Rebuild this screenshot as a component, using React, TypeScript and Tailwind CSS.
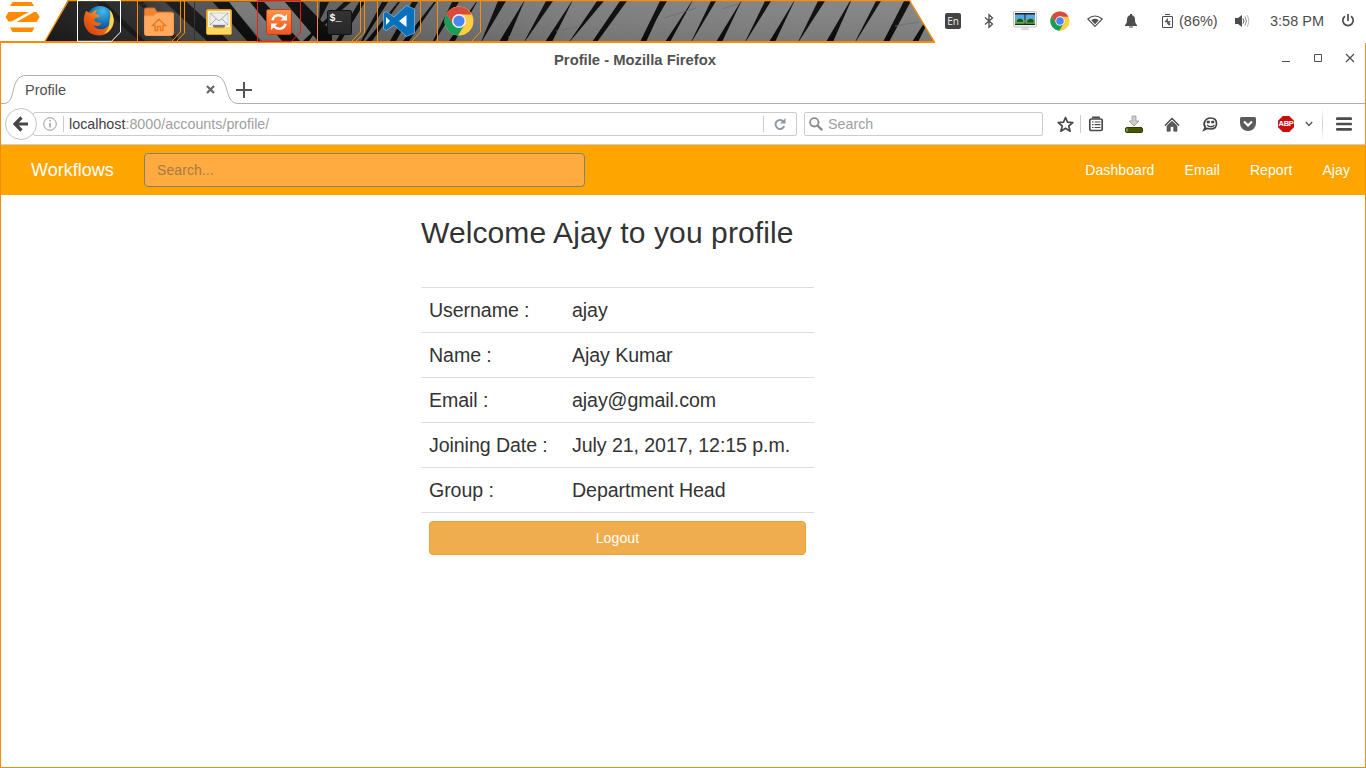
import type { ReactNode } from "react";

const UI_FONT = "font-['Liberation_Sans',Arial,sans-serif]";

/* Each blade: left x at the top, left x at the bottom, width at the top and at the bottom. */
const blades: [number, number, number, number][] = [
  [498, 481, 8, 0.5], [524, 499, 0.5, 8], [546, 524, 7, 0.5], [572, 545, 0.5, 7],
  [597, 569, 7, 0.5], [620, 592, 7, 5], [664, 641, 1, 5], [660, 640, 7, 3],
  [692, 665, 0.5, 5], [711, 691, 5, 0.5], [741, 716, 0.5, 6], [765, 745, 6, 0.5],
  [794, 769, 0.5, 6], [818, 798, 7, 0.5], [850, 826, 1, 7], [876, 855, 5, 0.5],
  [904, 883, 7, 6], [938, 912, 0.5, 6],
];

const darkBlades = [
  "M320 2h9l-10 20z", "M344 2h7l-37 32-5 7h-6z", "M359 2h6l-24 39h-5z",
  "M382 2h6l-25 39h-2z", "M398 2h2l-28 39h-6z", "M412 2h6l-22 39h-6z",
  "M434 2h2l-27 39h-6z", "M452 2h7l-24 39h-2z", "M476 2h1l-22 39h-6z",
];

function Backdrop() {
  return (
    <svg className="absolute inset-0" width="936" height="43" viewBox="0 0 936 43">
      <defs>
        <linearGradient id="metal" x1="45" x2="935" y1="0" y2="0" gradientUnits="userSpaceOnUse">
          <stop offset="0" stopColor="#191919" />
          <stop offset="0.1" stopColor="#2a2a2a" />
          <stop offset="0.15" stopColor="#444" />
          <stop offset="0.3" stopColor="#5c5c5c" />
          <stop offset="0.45" stopColor="#6e6e6e" />
          <stop offset="0.6" stopColor="#7d7d7d" />
          <stop offset="1" stopColor="#848484" />
        </linearGradient>
        <linearGradient id="shade" x2="0" y2="1">
          <stop offset="0" stopColor="#fff" stopOpacity="0.04" />
          <stop offset="1" stopColor="#000" stopOpacity="0.08" />
        </linearGradient>
        <clipPath id="band"><path d="M68 0H909.5L935 43H44z" /></clipPath>
      </defs>
      <g clipPath="url(#band)">
        <rect x="40" width="896" height="43" fill="url(#metal)" />
        <path d="M165 2h22l42 39h-22z" fill="#151515" />
        <path d="M187 2h26l30 39h-14z" fill="#505050" />
        <path d="M228 2h24l34 39h-24z" fill="#777" />
        <path d="M263 2h22l34 39h-22z" fill="#747474" />
        <g fill="#0a0a0a">
          <path d="M96 2h9l40 39h-6zM137 2h6l38 39h-6z" opacity="0.6" />
          <path d="M213 2h16l31 39h-13zM250 2h14l36 39h-18zM285 2h18l29 30v9h-14z" />
          {darkBlades.map((d) => <path key={d} d={d} />)}
          {blades.map(([t, b, tw, bw]) => (
            <path key={t} d={`M${t} 1h${tw}L${b + bw} 42h-${bw}z`} />
          ))}
        </g>
        <rect x="40" width="896" height="43" fill="url(#shade)" />
        <path d="M508 37l20-4M556 31l22-4M664 18l32-10M722 9l16-5M895 26l24-4" stroke="#6c6c6c" fill="none" strokeWidth=".8" />
      </g>
      <g fill="none" stroke="#ff8c00">
        <path d="M44.5 42L68.5 .5H909.5L934.5 42" strokeWidth="1.3" />
        <path d="M0 42H935" strokeWidth="2" />
        <path d="M137.5 1V41M180.5 1V32L172 41M184.5 1V33L177 41M317.5 1V41M360.5 1V32L352 41M364.5 1V33L356 41M377.5 1V41M420.5 1V32L412 41M437.5 1V41M480.5 1V32L472 41" />
      </g>
      <path d="M194.5 2V41" stroke="#333" />
      <path d="M77.5 .5H120.5V32L111.500 41.300H77.5z" fill="none" stroke="#fff" />
      <path d="M257.5 .5H300.5V32L291.500 41.300H257.5z" fill="none" stroke="#f21a12" />
    </svg>
  );
}

function ZorinLogo() {
  return (
    <svg width="46" height="36" viewBox="0 0 46 36" fill="#ff8c00">
      <path d="M12.500 2H31.500L34 6H10zM8.500 12H29L11.500 21.500H8.500L5.500 17zM36.500 12L39.700 17 36.500 22H16.500L34 12zM10 27.500H34.500L32 32H12.500z" />
    </svg>
  );
}

function FirefoxIcon() {
  return (
    <svg width="32" height="32" viewBox="0 0 32 32">
      <defs>
        <radialGradient id="globe" cx="0.6" cy="0.2" r="0.8">
          <stop offset="0" stopColor="#46b9e9" /><stop offset="0.6" stopColor="#126bb3" /><stop offset="1" stopColor="#123a78" />
        </radialGradient>
        <linearGradient id="fox" x1="0" y1="1" x2="1" y2="0">
          <stop offset="0" stopColor="#c93512" /><stop offset="0.5" stopColor="#ee6a13" /><stop offset="1" stopColor="#ffd83d" />
        </linearGradient>
      </defs>
      <circle cx="17" cy="14.500" r="13.500" fill="url(#globe)" />
      <path d="M3 6C1 10 0 15 1.500 20 4 27 9 30.500 16 30.500c9 0 14.500-7 14.500-14.500 0-5-1.500-8-4-11 1 4 1 7 0 9 1 6-2 9-6 10-5 1-9-1-10-4 3 2 5 1 8-1-1-2-3-1-5-2-2 0-3-3-1-4l4-1c0-2-2-3-4-3 0-2 1-3 2-4-3 0-5 2-6 3-2 0-4-1-5-2z" fill="url(#fox)" />
      <path d="M27 5c2.500 3 3.800 7 3.700 11C30.500 22 26 27 21 29c4-4 6-8 5.500-13C28 12 28 9 27 5z" fill="#ffd447" />
    </svg>
  );
}

function HomeFolderIcon() {
  return (
    <svg width="32" height="30" viewBox="0 0 32 30">
      <path d="M1.500 2.500q0-1.500 1.500-1.500h8.500l2.500 4h14q1.500 0 1.500 1.500V12h-28z" fill="#ed8436" stroke="#cf6c20" />
      <path d="M1.500 9h9l3-3h16.500q.5 0 .5 1v19.500q0 2-2 2H3.500q-2 0-2-2z" fill="#ffaa60" stroke="#f9984d" />
      <path d="M9.500 18.500L16 12.200 22.500 18.500H20v5h-2.500v-4h-3v4H12v-5z" fill="none" stroke="#e97a20" strokeWidth="1.500" />
    </svg>
  );
}

function MailIcon() {
  return (
    <svg width="28" height="28" viewBox="0 0 28 28">
      <rect x="1.500" y="1.500" width="25" height="25" rx="1.500" fill="#f5b83b" stroke="#e39b20" />
      <rect x="3" y="3" width="22" height="16" fill="#fff6e0" />
      <path d="M2 19h6q1 1.500 3 1.500h6q2 0 3-1.500h6v7H2z" fill="#ffd65e" />
      <path d="M5 5h18v12H5z" fill="#eee" stroke="#ccc" />
      <path d="M5 5l9 8 9-8M5 17l6-6M23 17l-6-6" fill="none" stroke="#999" strokeWidth=".8" />
      <path d="M8 17h12v1.500q-1 1-2 1h-8q-1 0-2-1z" fill="#777" />
    </svg>
  );
}

function UpdaterIcon() {
  return (
    <svg width="28" height="28" viewBox="0 0 28 28">
      <defs><linearGradient id="upd" x2="0" y2="1"><stop stopColor="#ff9548" /><stop offset="1" stopColor="#ed5522" /></linearGradient></defs>
      <rect x="1.500" y="1.500" width="25" height="25" rx="2" fill="url(#upd)" stroke="#bd3f16" />
      <path d="M7.500 12.300C8.500 7 15 5.600 18.800 9.300M20.500 15.700C19.500 21 13 22.400 9.200 18.700" fill="none" stroke="#fff" strokeWidth="2.400" />
      <path d="M22 6v6.500h-6.500zM6 22v-6.500h6.500z" fill="#fff" />
    </svg>
  );
}

function TerminalIcon() {
  return (
    <span className="flex h-[25px] w-[25px] rounded-[2px] border border-[#141414] bg-gradient-to-b from-[#333] to-[#282828] pl-[2px] pt-[2px] font-['Liberation_Mono',monospace] text-[10px] font-bold leading-3 text-white">
      $_
    </span>
  );
}

function CodeIcon() {
  return (
    <svg width="34" height="34" viewBox="0 0 34 34">
      <path d="M24.500 1.500L32.500 5V29L24.500 32.500 12 21 4.500 26.500 1.500 25V9L4.500 7.500 12 13z" fill="#0871bd" stroke="#8cc0e4" strokeWidth=".7" />
      <path d="M24.500 11v12L17 17zM4 13v8l4-4z" fill="#fff" />
    </svg>
  );
}

function ChromeIcon({ size }: { size: number }) {
  return (
    <svg width={size} height={size} viewBox="0 0 30 30">
      <circle cx="15" cy="15" r="14.500" fill="#ffce43" />
      <path d="M2.400 7.800A14.500 14.500 0 0 1 27.600 8.500H15L8.800 18.500z" fill="#d74a3d" />
      <path d="M2.400 7.800A14.500 14.500 0 0 0 14 29.500L20.700 18.500 15 21.500 9 18.400z" fill="#199c57" />
      <circle cx="15" cy="15" r="7" fill="#f3f3f3" />
      <circle cx="15" cy="15" r="5.600" fill="#4a85f0" />
    </svg>
  );
}

function Cell({ w, children }: { w: string; children?: ReactNode }) {
  return <div className={`flex h-full shrink-0 items-center justify-center ${w}`}>{children}</div>;
}

function Launcher() {
  return (
    <div className="relative h-[43px] w-[936px] shrink-0">
      <Backdrop />
      <div className="relative flex h-[41px]">
        <div className="w-[69px]"><ZorinLogo /></div>
        <Cell w="w-[60px]"><FirefoxIcon /></Cell>
        <Cell w="w-[60px] pt-[2px]"><HomeFolderIcon /></Cell>
        <Cell w="w-[60px] pt-[3px]"><MailIcon /></Cell>
        <Cell w="w-[60px] pt-[3px]"><UpdaterIcon /></Cell>
        <Cell w="w-[60px] pt-[3px]"><TerminalIcon /></Cell>
        <Cell w="w-[60px]"><CodeIcon /></Cell>
        <Cell w="w-[60px]"><ChromeIcon size={30} /></Cell>
      </div>
    </div>
  );
}

function Tray() {
  return (
    <div className="flex h-[42px] flex-1 items-center pl-[9px] text-[14.500px] text-[#4d4d4d]">
      <span className="flex h-4 w-4 items-center justify-center rounded-[2px] bg-[#444] font-['Open_Sans',sans-serif] text-[10px] text-[#eee]">En</span>
      <Cell w="w-[54px] pl-[2px]">
        <svg width="12" height="16" viewBox="0 0 12 16" fill="none" stroke="#4d4d4d" strokeWidth="1.300"><path d="M2 4.500L9.500 11 6 14.300V1.700L9.500 5 2 11.500" /></svg>
      </Cell>
      <Cell w="w-[20px]">
        <svg width="24" height="20" viewBox="0 0 24 20" className="shrink-0">
          <rect x=".5" y=".5" width="23" height="15.500" rx="1" fill="#f1f1f1" stroke="#c5c5c5" />
          <rect x="2" y="2" width="20" height="12" fill="#222" />
          <path d="M2 3.500h9.500v9H2zM12.500 3.500H22v9h-9.500z" fill="#55a9ea" />
          <path d="M2 9q5-2 9.500 0v3.500H2zM12.500 9q5-2 9.500 0v3.500h-9.500z" fill="#5db634" />
          <path d="M4 9.500q3-4 6 0v1.500H4zM14 10q3-4 6.500-1v2.500H14z" fill="#23501c" />
          <path d="M9 16h6l1.500 3h-9z" fill="#d9d9d9" />
        </svg>
      </Cell>
      <Cell w="w-[50px]"><ChromeIcon size={20} /></Cell>
      <Cell w="w-[20px]">
        <svg width="16" height="12" viewBox="0 0 16 12" className="shrink-0"><path d="M.8 4Q8-2 15.200 4L8 11.400z" fill="none" stroke="#4d4d4d" strokeWidth="1.100" /><path d="M4.300 5.200Q8 2.500 11.700 5.200L8 9.300z" fill="#4d4d4d" /></svg>
      </Cell>
      <Cell w="w-[52px]">
        <svg width="12" height="14" viewBox="0 0 12 14" fill="#4d4d4d"><path d="M5 0h2v1.300C9 1.800 10 3.500 10 5.500 10 9 11 10 12 11v1H0v-1c1-1 2-2 2-5.500 0-2 1-3.700 3-4.200zM4 12.500h4v1H4z" /></svg>
      </Cell>
      <Cell w="w-[20px]">
        <svg width="11" height="14" viewBox="0 0 11 14" fill="none" stroke="#4d4d4d"><path d="M.5 2.500h10v11H.5zM3 .5h5" /><path d="M5.500 4.500v3h3L5.500 10V8H3zM6.500 9.500h1.500v1.500H6.500z" fill="#4d4d4d" strokeWidth=".6" /></svg>
      </Cell>
      <span className="ml-[2px] w-[56px] pt-[2px]">(86%)</span>
      <svg width="15" height="14" viewBox="0 0 15 14" fill="none" stroke="#4d4d4d">
        <path d="M0 4h3l4-3v12L3 10H0z" fill="#4d4d4d" stroke="none" /><path d="M8 4.500q2 2.500 0 5" /><path d="M10 2.500q3 4.500 0 9" stroke="#888" /><path d="M12 1q3.500 6 0 12" stroke="#bbb" />
      </svg>
      <span className="ml-[20px] w-[71px] whitespace-nowrap pt-[2px]">3:58 PM</span>
      <svg width="14" height="14" viewBox="0 0 14 14" fill="none" stroke="#4d4d4d" strokeWidth="1.700"><path d="M4 2.200a5.200 5.200 0 1 0 6 0M7 0v7" /></svg>
    </div>
  );
}

function TitleBar() {
  return (
    <div className="flex h-[32px] items-start">
      <div className="w-[553px]" />
      <span className="w-[727px] pt-[7px] text-[14.800px] font-bold leading-[20px] text-[#525252]">Profile - Mozilla Firefox</span>
      <svg width="74" height="14" viewBox="0 0 74 14" className="mt-[8px]" fill="none" stroke="#4d4d4d">
        <path d="M1 10.500h8M33.500 3.500h7v7h-7z" /><path d="M65 3l8 8M73 3l-8 8" strokeWidth="1.200" />
      </svg>
    </div>
  );
}

function TabStrip() {
  return (
    <div className="relative h-[29px]">
      <svg className="absolute inset-0" width="1364" height="29" viewBox="0 0 1364 29" fill="none" stroke="#abaeb2">
        <path d="M0 28.500H3C16 28.500 8 .5 25 .5H213C230 .5 222 28.500 237 28.500H1364" />
      </svg>
      <div className="relative flex h-full items-center pl-[24px] text-[#505050]">
        <span className="w-[181px] pt-[2px] text-[14.500px]">Profile</span>
        <svg width="9" height="9" viewBox="0 0 9 9" stroke="#666" strokeWidth="2.200"><path d="M1 1l7 7M8 1L1 8" /></svg>
        <svg className="ml-[21px]" width="16" height="16" viewBox="0 0 16 16" stroke="#555" strokeWidth="2"><path d="M8 0v16M0 8h16" /></svg>
      </div>
    </div>
  );
}

function Toolbar() {
  return (
    <div className="flex h-[41px] items-center border-b border-[#cfcfcf] text-[14.300px] text-[#a0a0a0]">
      <svg width="32" height="32" viewBox="0 0 32 32" className="z-10 ml-[4px] shrink-0" fill="none">
        <circle cx="16" cy="16" r="15.500" fill="#fff" stroke="#c4c4c4" />
        <path d="M23 16H11M16.500 9.500L10 16l6.500 6.500" stroke="#474747" strokeWidth="3.200" />
      </svg>
      <div className="-ml-[4px] flex h-[24px] w-[764px] shrink-0 items-center rounded-[2px] border border-[#ccc] pl-[9px]">
        <svg width="14" height="14" viewBox="0 0 14 14" fill="none" stroke="#999"><circle cx="7" cy="7" r="6.300" /><path d="M7 6v4.500M7 3v1.500" strokeWidth="1.400" /></svg>
        <span className="ml-[6px] h-4 w-px bg-[#ccc]" />
        <span className="ml-[5px] flex-1 whitespace-nowrap pt-[2px]"><span className="text-[#404040]">localhost</span>:8000/accounts/profile/</span>
        <span className="h-4 w-px bg-[#ccc]" />
        <Cell w="w-[32px]">
          <svg width="12" height="12" viewBox="0 0 12 12" fill="none" stroke="#8b98a5" strokeWidth="2"><path d="M9.500 3.500A4.500 4.500 0 1 0 10.200 8.200" /><path d="M11.500 0v5.500H6z" fill="#8b98a5" stroke="none" /></svg>
        </Cell>
      </div>
      <div className="ml-[7px] flex h-[24px] w-[239px] shrink-0 items-center rounded-[2px] border border-[#ccc] pl-[4px]">
        <svg width="14" height="14" viewBox="0 0 14 14" fill="none" stroke="#8d8d8d"><circle cx="5.300" cy="5.300" r="4.200" strokeWidth="1.800" /><path d="M8.500 8.500l4.700 4.700" strokeWidth="2.400" /></svg>
        <span className="ml-[5px] pt-[2px]">Search</span>
      </div>
      <Cell w="w-[37px] pl-[7px]">
        <svg width="17" height="17" viewBox="0 0 17 17" fill="none" stroke="#4a4a4a" strokeWidth="1.700"><path d="M8.500 1.500l2 4.700 5.300.4-4 3.400 1.300 5.200-4.600-2.900-4.600 2.900 1.300-5.200L1.200 6.600l5.300-.4z" strokeLinejoin="round" /></svg>
      </Cell>
      <span className="h-[18px] w-px bg-[#ccc]" />
      <Cell w="w-[30px]">
        <svg width="16" height="16" viewBox="0 0 16 16" fill="none" stroke="#4a4a4a" strokeWidth="1.700"><rect x="1.800" y="3" width="12.400" height="11.500" rx="1.300" /><path d="M5 2.600V1.300h6v1.300" /><path d="M4 6h1.500M4 8.700h1.500M4 11.500h1.500M6.500 6h6M6.500 8.700h6M6.500 11.500h6" strokeWidth="1.200" /></svg>
      </Cell>
      <Cell w="w-[46px]">
        <svg width="18" height="18" viewBox="0 0 18 18"><path d="M7 1h4v5h3l-5 5-5-5h3z" fill="#ccc" stroke="#999" strokeWidth=".8" /><rect x=".5" y="12.500" width="17" height="5" rx="1.500" fill="#455500" stroke="#314000" /><path d="M1 13.500h2v3H1z" fill="#75944a" /></svg>
      </Cell>
      <Cell w="w-[30px]">
        <svg width="16" height="15" viewBox="0 0 16 15" fill="none" stroke="#4a4a4a"><path d="M1 8.500l7-7 7 7" strokeWidth="1.500" /><path d="M3 8.800L8 4.300l5 4.500v5.400H9.700V9.500H6.300v4.700H3z" fill="#5a5a5a" strokeWidth=".6" /></svg>
      </Cell>
      <Cell w="w-[46px]">
        <svg width="16" height="15" viewBox="0 0 16 15" fill="none" stroke="#424242"><path d="M8.500 1C12.500 1 14.500 3.300 14.500 6.500S12.500 12 8.500 12L5 11.500 2 13 3.300 10.300C.5 7 3 1 8.500 1z" strokeWidth="1.700" /><path d="M5 4h2.500v2H5zM9.500 4H12v2H9.500z" fill="#424242" strokeWidth=".5" /><path d="M5 8q4 3.500 7.500 0" strokeWidth="1.200" /></svg>
      </Cell>
      <Cell w="w-[30px]">
        <svg width="16" height="14" viewBox="0 0 16 14"><path d="M1.500 0h13Q16 0 16 1.500V6a8 8 0 0 1-16 0V1.500Q0 0 1.500 0z" fill="#5b5b5b" /><path d="M4 4.500l4 4 4-4" fill="none" stroke="#fff" strokeWidth="2.200" /></svg>
      </Cell>
      <Cell w="w-[46px]">
        <span className="flex h-4 w-4 items-center justify-center bg-[#c70d0d] text-[7.500px] font-bold leading-none tracking-[-0.3px] text-white [clip-path:polygon(30%_0,70%_0,100%_30%,100%_70%,70%_100%,30%_100%,0_70%,0_30%)]">ABP</span>
      </Cell>
      <svg width="8" height="6" viewBox="0 0 8 6" fill="none" stroke="#555" strokeWidth="1.300" className="-ml-[4px]"><path d="M.8 1L4 4.500 7.200 1" /></svg>
      <span className="ml-[9px] h-[32px] w-px bg-gradient-to-b from-white via-[#ccc] to-white" />
      <svg className="ml-[13px]" width="16" height="14" viewBox="0 0 16 14" stroke="#4a4a4a" strokeWidth="2.700" strokeLinecap="round"><path d="M1.300 1.700h13.400M1.300 7h13.400M1.300 12.300h13.400" /></svg>
    </div>
  );
}

const rows = [
  ["Username :", "ajay"],
  ["Name :", "Ajay Kumar"],
  ["Email :", "ajay@gmail.com"],
  ["Joining Date :", "July 21, 2017, 12:15 p.m."],
  ["Group :", "Department Head"],
];

function Page() {
  return (
    <div className="flex-1 bg-white text-sm text-[#333]">
      <nav className="flex h-[50px] items-center bg-[#ffa500] text-white">
        <a className="w-[143px] pl-[30px] text-[18px] leading-5">Workflows</a>
        <input
          className="h-[34px] w-[441px] rounded-[4px] border border-[#808080] bg-[#ffab40] px-3 text-sm tracking-[0.08px] outline-none placeholder:text-[#a57c45]"
          placeholder="Search..."
        />
        <div className="ml-auto flex leading-5 tracking-[0.08px]">
          {["Dashboard", "Email", "Report", "Ajay"].map((item) => <a key={item} className="px-[15px]">{item}</a>)}
        </div>
      </nav>
      <main className="ml-[420px] w-[393px]">
        <h1 className="whitespace-nowrap pt-[21px] text-[30px] leading-[33px] tracking-[0.11px]">Welcome Ajay to you profile</h1>
        <div className="mt-[38px]">
          {rows.map(([label, value]) => (
            <div key={label} className="flex h-[45px] border-t border-[#ddd] px-2 pt-2 text-[19.600px] leading-[28px] tracking-[-0.08px]">
              <span className="w-[143px]">{label}</span>
              <span>{value}</span>
            </div>
          ))}
          <div className="border-t border-[#ddd] p-2">
            <button className="h-[34px] w-full rounded-[4px] border border-[#eea236] bg-[#f0ad4e] text-sm tracking-[0.15px] text-white">Logout</button>
          </div>
        </div>
      </main>
    </div>
  );
}

export default function App() {
  return (
    <div className={`flex h-[768px] w-[1366px] flex-col overflow-hidden bg-white ${UI_FONT}`}>
      <header className="flex h-[43px] shrink-0"><Launcher /><Tray /></header>
      <div className="flex flex-1 flex-col border-x border-b border-[#f68b0a]">
        <TitleBar />
        <TabStrip />
        <Toolbar />
        <Page />
      </div>
    </div>
  );
}
